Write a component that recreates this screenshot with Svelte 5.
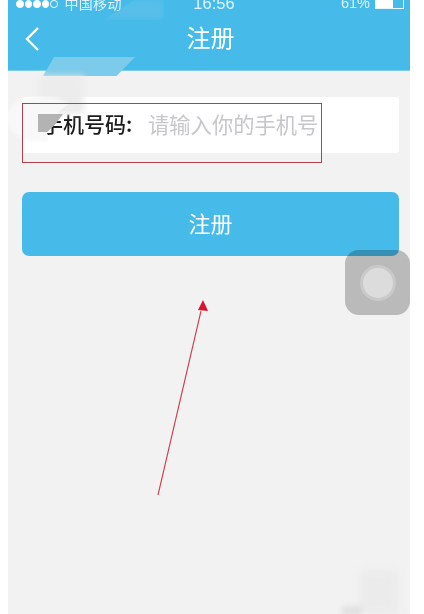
<script lang="ts">
  // dots of the signal meter, the last one is empty
  const signal = [1, 1, 1, 1, 0];
</script>

<div class="page">
  <div class="phone">
    <header class="top">
      <div class="status">
        <div class="carrier">
          <span class="dots">
            {#each signal as on}
              <i class:on></i>
            {/each}
          </span>
          <span>中国移动</span>
        </div>
        <span class="time">16:56</span>
        <div class="power">
          <span>61%</span>
          <span class="battery"><b></b></span>
        </div>
      </div>
      <div class="nav">
        <svg class="back" width="16" height="26" viewBox="0 0 16 26">
          <path d="M14 2 L3 13 L14 24" fill="none" stroke="#fff" stroke-width="2.4" />
        </svg>
        <h1>注册</h1>
      </div>
    </header>

    <main class="content">
      <div class="field">
        <span class="label">手机号码:</span>
        <span class="placeholder">请输入你的手机号</span>
      </div>
      <button class="submit"><span>注册</span></button>
    </main>

    <!-- smudges left by the person who masked the screenshot -->
    <div class="smear sky"></div>
    <div class="smear sky-top"></div>
    <div class="smear haze"></div>
    <div class="smear blot"></div>
    <div class="smear corner"></div>
    <div class="smear corner-low"></div>
    <div class="mask"></div>

    <div class="touch"><span></span></div>

    <div class="callout"></div>
    <svg class="arrow" width="60" height="210" viewBox="0 0 60 210">
      <path d="M9 198 L52 14" stroke="#c8404f" stroke-width="1.1" fill="none" />
      <path d="M54 3 L59 14 L49 13 Z" fill="#d8152a" />
    </svg>
  </div>
</div>

<style>
  :global(body) {
    margin: 0;
    background: #fff;
  }
  .page {
    height: 614px;
    overflow: hidden;
    padding-left: 8px;
    font-family: "Noto Sans CJK SC", "Liberation Sans", sans-serif;
  }
  .phone {
    position: relative;
    width: 402px;
    height: 614px;
    overflow: hidden;
    background: #f2f2f3;
  }
  .top {
    height: 70px;
    background: #46bbea;
    color: #fff;
    box-shadow: 0 1px 0 #7fcdec;
  }
  .status {
    display: flex;
    align-items: center;
    justify-content: space-between;
    height: 12px;
    padding: 0 6px 0 8px;
    font-family: "Liberation Sans", "Noto Sans CJK SC", sans-serif;
    font-size: 14.5px;
    color: #dff2fb;
    transform: translateY(-3px);
  }
  .carrier,
  .power {
    display: flex;
    align-items: center;
    width: 130px;
  }
  .carrier {
    gap: 7px;
  }
  .power {
    justify-content: flex-end;
    gap: 5px;
  }
  .carrier span:last-child {
    font-size: 14px;
    letter-spacing: 0.3px;
  }
  .time {
    margin-left: 8px;
    font-size: 16.5px;
  }
  .dots {
    display: flex;
    gap: 1px;
    transform: translateY(1px);
  }
  .dots i {
    width: 7.5px;
    height: 7.5px;
    border: 1px solid #fff;
    border-radius: 50%;
    box-sizing: border-box;
  }
  .dots i.on {
    background: #fff;
  }
  .battery {
    display: block;
    width: 29px;
    height: 11px;
    border: 1px solid #e4f5fc;
    box-sizing: border-box;
  }
  .battery b {
    display: block;
    width: 17px;
    height: 100%;
    background: #fff;
  }
  .nav {
    position: relative;
    display: flex;
    align-items: center;
    justify-content: center;
    height: 54px;
  }
  .back {
    position: absolute;
    left: 16px;
    top: 14px;
  }
  .nav h1 {
    margin: 0 0 4px 3px;
    font-size: 24px;
    font-weight: 400;
    line-height: 30px;
  }
  .content {
    display: flex;
    flex-direction: column;
    padding: 27px 11px 0 14px;
  }
  .field {
    display: flex;
    align-items: center;
    height: 52px;
    padding: 0 0 4px 20px;
    background: #fff;
    border-radius: 3px;
  }
  .label {
    width: 106px;
    font-size: 21px;
    font-weight: 500;
    color: #1c1c1c;
    white-space: nowrap;
  }
  .placeholder {
    font-size: 21.3px;
    color: #c6c6cb;
    white-space: nowrap;
  }
  .submit {
    height: 64px;
    margin-top: 39px;
    padding: 0 0 4px;
    border: 0;
    border-radius: 7px;
    background: #46bbea;
    color: #fff;
    font: inherit;
    font-size: 22px;
  }
  .smear {
    position: absolute;
  }
  .sky {
    left: 35px;
    top: 57px;
    width: 92px;
    height: 19px;
    background: #7ccbea;
    clip-path: polygon(12% 0, 100% 0, 80% 100%, 0 100%);
  }
  .sky-top {
    left: 96px;
    top: 0;
    width: 60px;
    height: 20px;
    background: #63c2e8;
    opacity: 0.6;
    filter: blur(3px);
    clip-path: polygon(50% 0, 100% 0, 100% 100%, 0 100%);
  }
  .haze {
    left: 30px;
    top: 76px;
    width: 46px;
    height: 38px;
    background: #ececec;
    filter: blur(3px);
  }
  .blot {
    left: -2px;
    top: 96px;
    width: 72px;
    height: 46px;
    border-radius: 50%;
    background: #f8f8f8;
    filter: blur(2px);
    clip-path: polygon(0 0, 100% 0, 52% 62%, 60% 100%, 0 100%);
  }
  .corner {
    left: 352px;
    top: 570px;
    width: 38px;
    height: 44px;
    background: #ebebeb;
    filter: blur(4px);
  }
  .corner-low {
    left: 334px;
    top: 606px;
    width: 20px;
    height: 10px;
    background: #e2e2e2;
    filter: blur(2px);
  }
  .mask {
    position: absolute;
    left: 30px;
    top: 114px;
    width: 25px;
    height: 18px;
    background: #b3b3b3;
    clip-path: polygon(0 0, 100% 0, 68% 60%, 36% 100%, 0 100%);
  }
  .touch {
    position: absolute;
    left: 337px;
    top: 250px;
    display: flex;
    align-items: center;
    justify-content: center;
    width: 65px;
    height: 65px;
    border-radius: 14px;
    background: #c4c4c4;
    mix-blend-mode: multiply;
  }
  .touch span {
    width: 30px;
    height: 30px;
    border-radius: 50%;
    background: #e8e8e8;
    box-shadow: 0 0 0 3px #d4d4d4;
  }
  .callout {
    position: absolute;
    left: 14px;
    top: 103px;
    width: 298px;
    height: 58px;
    border: 1px solid #b0404e;
    pointer-events: none;
  }
  .arrow {
    position: absolute;
    left: 141px;
    top: 297px;
  }
</style>
